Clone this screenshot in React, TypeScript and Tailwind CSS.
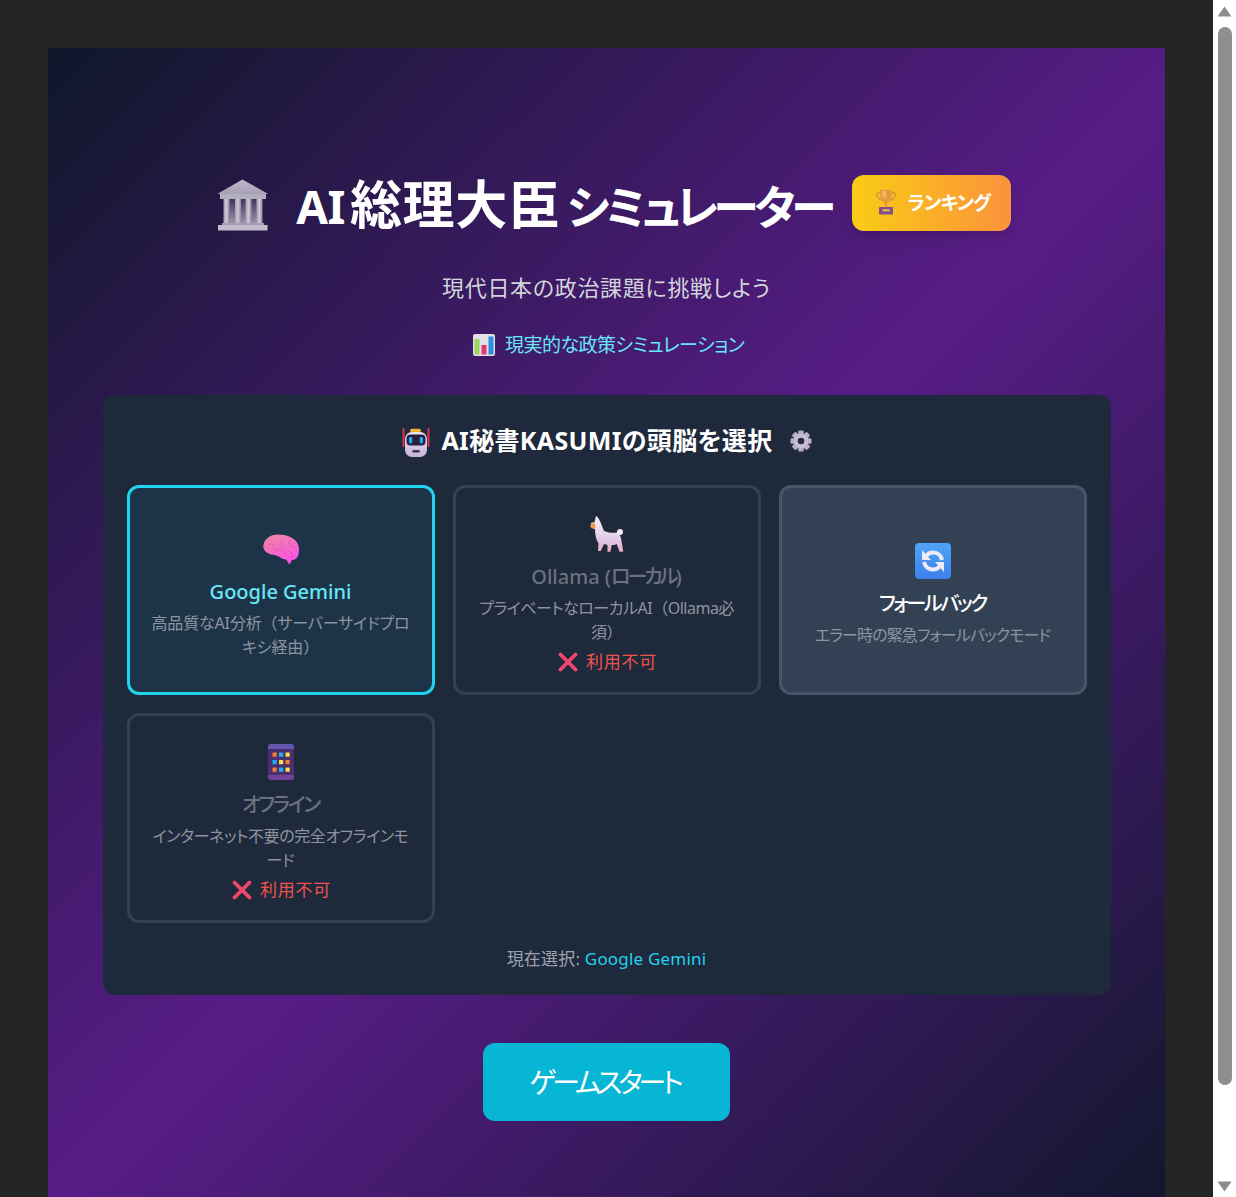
import type { ReactNode } from "react";

function BuildingIcon() {
  return (
    <svg viewBox="0 0 52 52" className="w-[52px] h-[52px] shrink-0 mt-1">
      <defs>
        <linearGradient id="bldTop" x1="0" y1="0" x2="0" y2="1">
          <stop offset="0" stopColor="#bdb7c9" />
          <stop offset="1" stopColor="#a8a1b6" />
        </linearGradient>
        <linearGradient id="bldGap" x1="0" y1="0" x2="0" y2="1">
          <stop offset="0" stopColor="#3f3560" />
          <stop offset="1" stopColor="#9a93a8" />
        </linearGradient>
        <linearGradient id="bldCol" x1="0" y1="0" x2="1" y2="0">
          <stop offset="0" stopColor="#a29bb0" />
          <stop offset="0.5" stopColor="#cfc9d8" />
          <stop offset="1" stopColor="#8f889e" />
        </linearGradient>
      </defs>
      <path d="M25.5 0.5 L50.5 14.5 V15 H1 V14.5 Z" fill="url(#bldTop)" />
      <rect x="3" y="15" width="46" height="5" fill="#b3adc0" />
      <rect x="10" y="20" width="32" height="24" fill="url(#bldGap)" />
      {[6.5, 18, 28.5, 39.5].map((x) => (
        <rect key={x} x={x} y="20" width="6" height="24" fill="url(#bldCol)" />
      ))}
      <rect x="5" y="44" width="42" height="2" fill="#a69fb3" />
      <rect x="1" y="46" width="49.5" height="5.5" fill="#c2bccd" />
    </svg>
  );
}

function TrophyIcon() {
  return (
    <svg viewBox="0 0 20 26" className="w-5 h-[26px] shrink-0">
      <path d="M5 3 C1 2 0 4 1 6 C2 9 5 10 7 10 M15 3 C19 2 20 4 19 6 C18 9 15 10 13 10" fill="none" stroke="#dd9a33" strokeWidth="1.6" />
      <path d="M4 0 H16 V4 C16 9 13 12 11.3 13 V17 H8.7 V13 C7 12 4 9 4 4 Z" fill="#e69b3e" />
      <path d="M6 1 H10 V9 C8 8 6 6 6 3 Z" fill="#f3ba55" />
      <rect x="3" y="17" width="14" height="7.5" rx="0.8" fill="#84508a" />
      <rect x="6.5" y="19.3" width="7" height="2" fill="#f0bd5c" />
    </svg>
  );
}

function ChartIcon() {
  return (
    <svg viewBox="0 0 22 22" className="w-[22px] h-[22px] shrink-0">
      <rect width="22" height="22" rx="2" fill="#e3dfe8" />
      <rect x="1.5" y="5" width="5" height="15.5" fill="#9bd65c" />
      <rect x="8.5" y="11" width="5" height="9.5" fill="#e8376e" />
      <rect x="15.5" y="2.5" width="5" height="18" fill="#2a8fdc" />
    </svg>
  );
}

function RobotIcon() {
  return (
    <svg viewBox="0 0 30 30" className="w-[30px] h-[30px] shrink-0 mt-1">
      <defs>
        <linearGradient id="rbt" x1="0" y1="0" x2="0" y2="1">
          <stop offset="0" stopColor="#ece3f2" />
          <stop offset="1" stopColor="#c6b2d6" />
        </linearGradient>
      </defs>
      <rect x="9" y="0.7" width="11" height="3.5" rx="1.7" fill="#f2b233" />
      <rect x="1.5" y="0" width="2" height="19" rx="1" fill="#e0305f" />
      <rect x="26.5" y="0" width="2" height="19" rx="1" fill="#e0305f" />
      <rect x="4" y="4" width="22" height="25" rx="7" fill="url(#rbt)" />
      <rect x="5.5" y="6.5" width="19" height="11" rx="4" fill="#26213c" />
      <rect x="8" y="9" width="3.2" height="6.5" rx="1.4" fill="#2ea6f2" />
      <rect x="18.8" y="9" width="3.2" height="6.5" rx="1.4" fill="#2ea6f2" />
      <rect x="11.3" y="22" width="7.5" height="2.4" rx="1.2" fill="#3f3656" />
    </svg>
  );
}

function GearIcon() {
  return (
    <svg viewBox="0 0 24 24" className="w-[22px] h-[22px] shrink-0">
      <g fill="#b9aec8">
        {[0, 45, 90, 135].map((a) => (
          <rect key={a} x="9" y="0.5" width="6" height="23" rx="1.5" transform={`rotate(${a} 12 12)`} />
        ))}
      </g>
      <circle cx="12" cy="12" r="8" fill="#c8bed4" />
      <circle cx="12" cy="12" r="3.6" fill="#2b2a3d" />
    </svg>
  );
}

function BrainIcon() {
  return (
    <svg viewBox="0 0 38 34" className="w-[38px] h-[34px]">
      <defs>
        <linearGradient id="brn" x1="0" y1="0" x2="0.4" y2="1">
          <stop offset="0" stopColor="#ef8a9e" />
          <stop offset="1" stopColor="#f855e4" />
        </linearGradient>
      </defs>
      <path
        d="M1.3 14 C2 7 8 2.5 16 2.5 C28 2.5 37 8 37 17 C37 24 35 28 30 28 L27.5 32.5 L24 27.5 C20 27.5 17 24 13 23 C8 23 1 20 1.3 14 Z"
        fill="url(#brn)"
      />
      <path
        d="M6 13 C10 10 13 13 12 17 M18 8 C21 9 22 13 19 15 M28 8 C26 11 28 14 32 15 M12 19 C16 16 21 18 23 21 M26 19 C29 19 31 22 30 26"
        fill="none"
        stroke="#d8408a"
        strokeOpacity="0.6"
        strokeWidth="0.8"
        strokeLinecap="round"
      />
    </svg>
  );
}

function LlamaIcon() {
  return (
    <svg viewBox="0 0 36 36" className="w-9 h-9">
      <defs>
        <linearGradient id="lam" x1="0" y1="0" x2="0" y2="1">
          <stop offset="0" stopColor="#f6f1fa" />
          <stop offset="0.7" stopColor="#e0c8e6" />
          <stop offset="1" stopColor="#e8a8b8" />
        </linearGradient>
      </defs>
      <path
        d="M7 0 L8.5 1 C11 4 13 10 15 15 C20 17 25 17 28 16.5 C30 17 32 20 32.7 26 L34.3 35.7 H30.5 L27.7 28 C26 29 24.5 29 22.7 29 L21.5 35.7 H18.5 L18.5 29 L15 28 L11.7 35 H9 L9.5 27 C7 24 6 18 6 13 L3 12 L2 7 L5.5 6 Z"
        fill="url(#lam)"
      />
      <circle cx="31" cy="16" r="3" fill="#f3ecf6" />
      <path d="M1 9.5 L5.5 6 L6.5 12 L2.5 12.5 Z" fill="#f29a50" />
    </svg>
  );
}

function RefreshIcon() {
  return (
    <svg viewBox="0 0 36 36" className="w-9 h-9">
      <defs>
        <linearGradient id="rfs" x1="0" y1="0" x2="0" y2="1">
          <stop offset="0" stopColor="#4ea4f8" />
          <stop offset="1" stopColor="#3d80ea" />
        </linearGradient>
      </defs>
      <rect width="36" height="36" rx="4" fill="url(#rfs)" />
      <g fill="none" stroke="#efeaf8" strokeWidth="4">
        <path d="M27 17 C26 12 22 9.5 18 9.5 C15 9.5 13 10.5 11 13" />
        <path d="M9 19 C10 24 14 26.5 18 26.5 C21 26.5 23 25.5 25 23" />
      </g>
      <path d="M7 7 V17 H16 Z" fill="#efeaf8" />
      <path d="M29 29 V19 H20 Z" fill="#efeaf8" />
    </svg>
  );
}

function PhoneIcon() {
  const colors = [
    "#f57f30", "#22aef2", "#fde047",
    "#22aef2", "#fde047", "#f57f30",
    "#f57f30", "#22aef2", "#fde047",
  ];
  return (
    <svg viewBox="0 0 26 36" className="w-[26px] h-9">
      <rect width="26" height="36" rx="3" fill="#4a2f6e" />
      <path d="M0 5 V3 C0 1 1 0 3 0 H23 C25 0 26 1 26 3 V5 Z" fill="#6258ad" />
      <path d="M0 31 V33 C0 35 1 36 3 36 H23 C25 36 26 35 26 33 V31 Z" fill="#72439c" />
      {colors.map((c, i) => (
        <rect
          key={i}
          x={4.5 + (i % 3) * 6.5}
          y={8.5 + Math.floor(i / 3) * 7.5}
          width="4.2"
          height="4.2"
          rx="0.5"
          fill={c}
        />
      ))}
    </svg>
  );
}

function CrossIcon() {
  return (
    <svg viewBox="0 0 20 20" className="w-5 h-5 shrink-0">
      <path d="M2.5 2.5 L17.5 17.5 M17.5 2.5 L2.5 17.5" stroke="#f0476e" strokeWidth="3.8" strokeLinecap="round" />
    </svg>
  );
}

function Paren({ children }: { children: string }) {
  return <span className="[font-feature-settings:normal]">{children}</span>;
}

function Unavailable() {
  return (
    <div className="mt-[6px] ml-[2px] h-6 flex items-center justify-center gap-2 text-[#ef5350] text-[17px] [font-feature-settings:'palt'] tracking-[0.7px]">
      <CrossIcon />
      <span>利用不可</span>
    </div>
  );
}

type CardProps = {
  icon: ReactNode;
  title: ReactNode;
  titleClass: string;
  boxClass: string;
  descClass: string;
  children: ReactNode;
  unavailable?: boolean;
};

function EngineCard({ icon, title, titleClass, boxClass, descClass, children, unavailable }: CardProps) {
  return (
    <div className={`h-[210px] rounded-xl border-[3px] flex flex-col items-center justify-center text-center px-3 pt-[7px] ${boxClass}`}>
      <div className="h-10 flex items-center justify-center">{icon}</div>
      <div className={`mt-[9px] h-7 leading-7 text-[20px] font-medium [font-feature-settings:'palt'] ${titleClass}`}>{title}</div>
      <div className={`mt-[5px] leading-6 text-[16px] text-[#8e949f] [font-feature-settings:'palt'] ${descClass}`}>{children}</div>
      {unavailable && <Unavailable />}
    </div>
  );
}

function Scrollbar() {
  return (
    <aside className="w-[23px] shrink-0 bg-white flex flex-col items-center">
      <svg viewBox="0 0 15 11" className="w-[15px] h-[11px] mt-[6px] mr-[1px]">
        <path d="M7.5 0.5 L14.5 10.5 H0.5 Z" fill="#8c8c8c" />
      </svg>
      <div className="w-[14px] h-[1058px] mt-[10px] rounded-full bg-[#8f8f8f]" />
      <svg viewBox="0 0 15 11" className="w-[15px] h-[11px] mt-[96px] mr-[1px]">
        <path d="M7.5 10.5 L14.5 0.5 H0.5 Z" fill="#8c8c8c" />
      </svg>
    </aside>
  );
}

export default function App() {
  return (
    <div className="flex h-[1197px] overflow-hidden bg-[#242424] font-['Noto_Sans','Noto_Sans_CJK_JP',sans-serif] text-white">
      <main className="flex-1 min-w-0 px-12 pt-12">
        <div className="h-[1211px] pt-[127px] bg-[linear-gradient(135deg,#0f172a,#581c87,#0f172a)] flex flex-col items-center">
          <header className="h-14 pl-[15px] flex items-center gap-[27px]">
            <BuildingIcon />
            <div className="flex items-center gap-5">
              <h1 className="mt-[2px] h-14 leading-[56px] font-bold [font-feature-settings:'palt'] whitespace-nowrap">
                <span className="text-[46px] tracking-[-0.5px]">AI</span>
                <span className="ml-[5px] text-[52px] tracking-[0.7px]">総理大臣</span>
                <span className="ml-[6px] text-[46px] tracking-[-4.4px]">シミュレーター</span>
              </h1>
              <button className="h-14 w-[159px] pl-1 rounded-xl bg-[linear-gradient(90deg,#facc15,#fb923c)] shadow-lg flex items-center justify-center gap-[11px] text-[19px] tracking-[-0.8px] font-bold [font-feature-settings:'palt']">
                <TrophyIcon />
                <span>ランキング</span>
              </button>
            </div>
          </header>
          <p className="mt-[42px] h-7 leading-7 text-[22px] tracking-[0.7px] text-[#d1d5db] [font-feature-settings:'palt']">現代日本の政治課題に挑戦しよう</p>
          <div className="mt-[30px] h-7 pl-1 flex items-center gap-[10px] text-[19px] tracking-[-0.5px] text-[#67e8f9] [font-feature-settings:'palt']">
            <ChartIcon />
            <span>現実的な政策シミュレーション</span>
          </div>

          <section className="mt-[36px] w-[1008px] rounded-xl bg-[#1e293b] px-6 pt-6 pb-6">
            <div className="h-11 flex items-center justify-center">
              <RobotIcon />
              <h2 className="ml-[10px] text-[25px] tracking-[0.35px] font-bold [font-feature-settings:'palt']">AI秘書KASUMIの頭脳を選択</h2>
              <div className="ml-[17px]"><GearIcon /></div>
            </div>
            <div className="mt-[22px] grid grid-cols-3 gap-[18px]">
              <EngineCard
                icon={<BrainIcon />}
                title="Google Gemini"
                titleClass="text-[#67e8f9]"
                boxClass="border-[#22d3ee] bg-[#1d3448]"
                descClass="tracking-[-0.15px]"
              >
                高品質なAI分析<Paren>（</Paren>サーバーサイドプロ<br />キシ経由<Paren>）</Paren>
              </EngineCard>
              <EngineCard
                icon={<LlamaIcon />}
                title={<>Ollama (<span className="tracking-[-3px]">ローカル</span>)</>}
                titleClass="text-[#6b7280]"
                boxClass="border-[#334155] bg-[#1e293b]"
                descClass="tracking-[-0.5px]"
                unavailable
              >
                プライベートなローカルAI<Paren>（</Paren>Ollama必<br />須<Paren>）</Paren>
              </EngineCard>
              <EngineCard
                icon={<RefreshIcon />}
                title={<span className="tracking-[-2.3px]">フォールバック</span>}
                titleClass="text-white"
                boxClass="border-[#475569] bg-[#334155]"
                descClass="tracking-[-0.9px]"
              >
                エラー時の緊急フォールバックモード
              </EngineCard>
              <EngineCard
                icon={<PhoneIcon />}
                title={<span className="tracking-[-2.2px]">オフライン</span>}
                titleClass="text-[#6b7280]"
                boxClass="border-[#334155] bg-[#1e293b]"
                descClass="tracking-[-0.4px]"
                unavailable
              >
                インターネット不要の完全オフラインモ<br />ード
              </EngineCard>
            </div>
            <p className="mt-6 h-6 leading-6 text-center text-[17px] tracking-[0.2px] text-[#9ca3af] [font-feature-settings:'palt']">
              現在選択: <span className="text-[#22d3ee]">Google Gemini</span>
            </p>
          </section>

          <button className="mt-12 w-[247px] h-[78px] pr-1 rounded-xl bg-[#06b6d4] text-[28px] tracking-[-4.1px] [font-feature-settings:'palt']">ゲームスタート</button>
        </div>
      </main>
      <Scrollbar />
    </div>
  );
}
